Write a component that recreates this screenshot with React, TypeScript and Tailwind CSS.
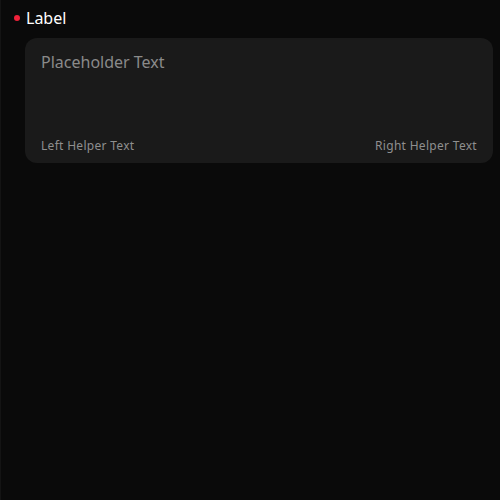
export default function App() {
  return (
    <div className="min-h-screen bg-[#0a0a0a] border-l border-[#141414] pt-1.5 pr-[7px] font-['Noto_Sans',sans-serif]">
      <div className="flex items-center gap-[6px] h-6 pl-[13px] mb-2">
        <span className="w-1.5 h-1.5 rounded-full bg-[#f0213a]" />
        <span className="text-white text-base leading-6">Label</span>
      </div>
      <div className="ml-6 bg-[#1a1a1a] rounded-xl h-[125px] px-4 pt-3 pb-[9px] flex flex-col justify-between">
        <div className="text-[#8a8a8a] text-base leading-6">Placeholder Text</div>
        <div className="flex justify-between text-xs leading-4 text-[#8f8f8f] tracking-[0.3px]">
          <span>Left Helper Text</span>
          <span>Right Helper Text</span>
        </div>
      </div>
    </div>
  );
}
